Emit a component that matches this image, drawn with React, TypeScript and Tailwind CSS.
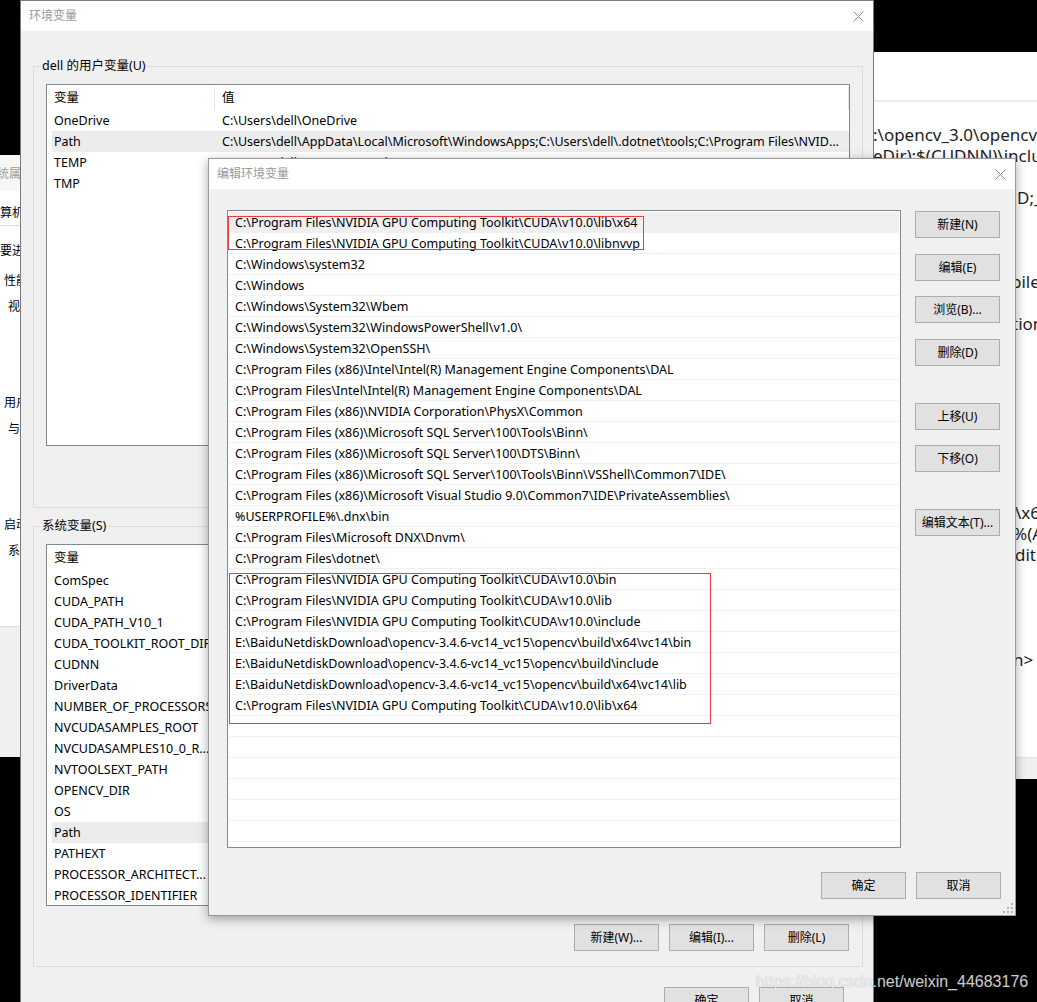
import React from "react";

const editPaths = [
  "C:\\Program Files\\NVIDIA GPU Computing Toolkit\\CUDA\\v10.0\\lib\\x64",
  "C:\\Program Files\\NVIDIA GPU Computing Toolkit\\CUDA\\v10.0\\libnvvp",
  "C:\\Windows\\system32",
  "C:\\Windows",
  "C:\\Windows\\System32\\Wbem",
  "C:\\Windows\\System32\\WindowsPowerShell\\v1.0\\",
  "C:\\Windows\\System32\\OpenSSH\\",
  "C:\\Program Files (x86)\\Intel\\Intel(R) Management Engine Components\\DAL",
  "C:\\Program Files\\Intel\\Intel(R) Management Engine Components\\DAL",
  "C:\\Program Files (x86)\\NVIDIA Corporation\\PhysX\\Common",
  "C:\\Program Files (x86)\\Microsoft SQL Server\\100\\Tools\\Binn\\",
  "C:\\Program Files (x86)\\Microsoft SQL Server\\100\\DTS\\Binn\\",
  "C:\\Program Files (x86)\\Microsoft SQL Server\\100\\Tools\\Binn\\VSShell\\Common7\\IDE\\",
  "C:\\Program Files (x86)\\Microsoft Visual Studio 9.0\\Common7\\IDE\\PrivateAssemblies\\",
  "%USERPROFILE%\\.dnx\\bin",
  "C:\\Program Files\\Microsoft DNX\\Dnvm\\",
  "C:\\Program Files\\dotnet\\",
  "C:\\Program Files\\NVIDIA GPU Computing Toolkit\\CUDA\\v10.0\\bin",
  "C:\\Program Files\\NVIDIA GPU Computing Toolkit\\CUDA\\v10.0\\lib",
  "C:\\Program Files\\NVIDIA GPU Computing Toolkit\\CUDA\\v10.0\\include",
  "E:\\BaiduNetdiskDownload\\opencv-3.4.6-vc14_vc15\\opencv\\build\\x64\\vc14\\bin",
  "E:\\BaiduNetdiskDownload\\opencv-3.4.6-vc14_vc15\\opencv\\build\\include",
  "E:\\BaiduNetdiskDownload\\opencv-3.4.6-vc14_vc15\\opencv\\build\\x64\\vc14\\lib",
  "C:\\Program Files\\NVIDIA GPU Computing Toolkit\\CUDA\\v10.0\\lib\\x64",
];

// pad the list with empty rows so the grid lines run to the bottom
const editRows = [...editPaths, ...Array(8).fill("")];

const userVars: [string, string][] = [
  ["OneDrive", "C:\\Users\\dell\\OneDrive"],
  [
    "Path",
    "C:\\Users\\dell\\AppData\\Local\\Microsoft\\WindowsApps;C:\\Users\\dell\\.dotnet\\tools;C:\\Program Files\\NVIDIA GPU Computing Toolkit\\CUDA\\v10.0\\bin",
  ],
  ["TEMP", "C:\\Users\\dell\\AppData\\Local\\Temp"],
  ["TMP", "C:\\Users\\dell\\AppData\\Local\\Temp"],
];

const sysVars: [string, string][] = [
  ["ComSpec", ""],
  ["CUDA_PATH", ""],
  ["CUDA_PATH_V10_1", ""],
  ["CUDA_TOOLKIT_ROOT_DIR", ""],
  ["CUDNN", ""],
  ["DriverData", ""],
  ["NUMBER_OF_PROCESSORS", ""],
  ["NVCUDASAMPLES_ROOT", ""],
  ["NVCUDASAMPLES10_0_R...", ""],
  ["NVTOOLSEXT_PATH", ""],
  ["OPENCV_DIR", ""],
  ["OS", ""],
  ["Path", ""],
  ["PATHEXT", ""],
  ["PROCESSOR_ARCHITECT...", ""],
  ["PROCESSOR_IDENTIFIER", ""],
];

const WinButton = ({ label, className = "" }: { label: string; className?: string }) => (
  <div
    className={`flex h-[27px] w-[85px] shrink-0 items-center justify-center border border-[#adadad] bg-[#e1e1e1] text-[12px] text-black ${className}`}
  >
    {label}
  </div>
);

const CloseIcon = () => (
  <svg width="11" height="11" viewBox="0 0 11 11">
    <path d="M0.5 0.5L10.5 10.5M10.5 0.5L0.5 10.5" stroke="#8c8c8c" strokeWidth="1" fill="none" />
  </svg>
);

const ResizeGrip = () => (
  <svg width="10" height="10" viewBox="0 0 10 10">
    <rect x="8" y="0" width="2" height="2" fill="#b4b4b4" />
    <rect x="4" y="4" width="2" height="2" fill="#b4b4b4" />
    <rect x="8" y="4" width="2" height="2" fill="#b4b4b4" />
    <rect x="0" y="8" width="2" height="2" fill="#b4b4b4" />
    <rect x="4" y="8" width="2" height="2" fill="#b4b4b4" />
    <rect x="8" y="8" width="2" height="2" fill="#b4b4b4" />
  </svg>
);

const ListView = ({ rows, selected }: { rows: [string, string][]; selected: string }) => (
  <div className="h-[362px] w-full overflow-hidden border border-[#828790] bg-white">
    <div className="flex h-[25px] items-center pt-[2px]">
      <div className="flex h-full w-[168px] shrink-0 items-center border-r border-[#e5e5e5] pl-[7px]">变量</div>
      <div className="flex h-full flex-1 items-center border-r border-[#e5e5e5] pl-[7px]">值</div>
    </div>
    {rows.map(([name, value]) => (
      <div
        key={name}
        className={`ml-[5px] flex h-[21px] items-center whitespace-nowrap pt-[2px] ${name === selected ? "bg-[#ececec]" : ""}`}
      >
        <div className="w-[163px] shrink-0 overflow-hidden pl-[2px]">{name}</div>
        <div className="min-w-0 flex-1 overflow-hidden text-ellipsis pl-[7px] pr-[8px]">{value}</div>
      </div>
    ))}
  </div>
);

const App = () => {
  return (
    <div className="relative h-[1002px] w-[1037px] overflow-hidden bg-black font-['Noto_Sans','Noto_Sans_CJK_SC',sans-serif] text-[12.5px] text-black">
      {/* right background window (project file text) */}
      <div className="absolute left-[873px] top-[52px] flex h-[727px] w-[164px] flex-col bg-white">
        <div className="h-[48px] shrink-0" />
        <div className="h-[2px] shrink-0 bg-[#ececec]" />
        <div className="flex-1 overflow-hidden whitespace-nowrap pt-[22px] text-[17px] leading-[21px] text-[#1e1e1e]">
          <div>:\opencv_3.0\opencv\build</div>
          <div>eDir):$(CUDNN)\include</div>
          <div>&nbsp;</div>
          <div className="pl-[144px]">D;_SCL</div>
          <div>&nbsp;</div>
          <div>&nbsp;</div>
          <div>&nbsp;</div>
          <div className="pl-[138px]">pile</div>
          <div>&nbsp;</div>
          <div className="pl-[139px]">tion</div>
          {Array.from({ length: 8 }).map((_, i) => (
            <div key={i}>&nbsp;</div>
          ))}
          <div className="pl-[142px]">\x64</div>
          <div className="pl-[140px]">%(Add</div>
          <div className="pl-[142px]">diti</div>
          {Array.from({ length: 4 }).map((_, i) => (
            <div key={i}>&nbsp;</div>
          ))}
          <div className="pl-[140px]">n&gt;</div>
        </div>
        <div className="h-[22px] shrink-0 border-t border-[#e3e3e3] bg-[#f0f0f0]" />
      </div>

      {/* left background window (system properties) */}
      <div className="absolute left-0 top-[155px] flex h-[602px] w-[40px] flex-col overflow-hidden whitespace-nowrap bg-white text-[12px] leading-[21px]">
        <div className="-ml-[15px] flex h-[36px] shrink-0 items-center bg-[#f7f7f7] text-[#9a9a9a]">系统属性</div>
        <div className="h-[35px] shrink-0 border-b border-[#dadada] pt-[11px]">
          <span className="-ml-[12px]">计算机名</span>
        </div>
        <div className="mt-[14px]">要进行大多数更改</div>
        <div className="mt-[9px] pl-[4px]">性能</div>
        <div className="mt-[5px] pl-[8px]">视觉效果</div>
        <div className="mt-[75px] pl-[4px]">用户配置文件</div>
        <div className="mt-[5px] pl-[8px]">与登录帐户</div>
        <div className="mt-[75px] pl-[4px]">启动和故障恢复</div>
        <div className="mt-[5px] pl-[8px]">系统启动</div>
        <div className="flex-1" />
        <div className="h-[131px] shrink-0 border-t border-[#dadada] bg-[#f0f0f0]" />
      </div>

      {/* 环境变量 dialog */}
      <div className="absolute left-[20px] top-0 flex h-[1040px] w-[854px] flex-col border-x border-t border-[#7a7a7a] bg-[#f0f0f0]">
        <div className="flex h-[30px] shrink-0 items-center justify-between bg-white pl-[8px] pr-[9px] text-[12px] text-[#999]">
          <span>环境变量</span>
          <CloseIcon />
        </div>

        <fieldset className="ml-[12px] mr-[10px] mt-[27px] min-w-0 border border-[#dcdcdc] px-[12px] pb-[61px] pt-[10px]">
          <legend className="-ml-[6px] px-[2px] leading-[16px]">dell 的用户变量(U)</legend>
          <ListView rows={userVars} selected="Path" />
        </fieldset>

        <fieldset className="ml-[12px] mr-[10px] mt-[10px] min-w-0 border border-[#dcdcdc] px-[12px] pb-[15px] pt-[10px]">
          <legend className="-ml-[6px] px-[2px] leading-[16px]">系统变量(S)</legend>
          <ListView rows={sysVars} selected="Path" />
          <div className="mt-[18px] flex justify-end gap-[10px] pr-[1px]">
            <WinButton label="新建(W)..." />
            <WinButton label="编辑(I)..." />
            <WinButton label="删除(L)" />
          </div>
        </fieldset>

        <div className="mt-[20px] flex justify-end gap-[10px] pr-[29px]">
          <WinButton label="确定" />
          <WinButton label="取消" />
        </div>
      </div>

      {/* 编辑环境变量 dialog */}
      <div className="absolute left-[208px] top-[158px] flex h-[758px] w-[808px] flex-col border border-[#9a9a9a] bg-[#f0f0f0] shadow-[0_3px_10px_rgba(0,0,0,0.35)]">
        <div className="flex h-[30px] shrink-0 items-center justify-between bg-white pl-[8px] pr-[9px] text-[12px] text-[#999]">
          <span>编辑环境变量</span>
          <CloseIcon />
        </div>

        <div className="flex pl-[18px] pt-[21px]">
          <div className="relative h-[638px] w-[674px] shrink-0 overflow-hidden border border-[#828790] bg-white pt-[1px]">
            {editRows.map((row, i) => (
              <div
                key={i}
                className={`mx-[1px] flex h-[21px] items-center whitespace-nowrap border-b border-[#f0f0f0] pl-[6px] pt-[2px] ${
                  i === 0 ? "bg-[#efefef]" : ""
                }`}
              >
                {row}
              </div>
            ))}
            <div className="absolute left-0 top-[5px] h-[34px] w-[416px] border border-[#ee3b3b]" />
            <div className="absolute left-[1px] top-[362px] h-[151px] w-[482px] border border-[#ee3b3b]" />
          </div>

          <div className="ml-[14px] flex flex-col pt-[1px]">
            <WinButton label="新建(N)" />
            <WinButton label="编辑(E)" className="mt-[16px]" />
            <WinButton label="浏览(B)..." className="mt-[15px]" />
            <WinButton label="删除(D)" className="mt-[16px]" />
            <WinButton label="上移(U)" className="mt-[37px]" />
            <WinButton label="下移(O)" className="mt-[15px]" />
            <WinButton label="编辑文本(T)..." className="mt-[37px]" />
          </div>
        </div>

        <div className="mt-[24px] flex justify-end gap-[10px] pr-[14px]">
          <WinButton label="确定" />
          <WinButton label="取消" />
        </div>

        <div className="absolute bottom-[2px] right-[2px] flex">
          <ResizeGrip />
        </div>
      </div>

      {/* csdn watermark */}
      <div className="absolute left-[756px] top-[971px] whitespace-nowrap font-['Liberation_Sans',sans-serif] text-[16px] leading-[22px] text-white/80 [text-shadow:0_0_1px_rgba(0,0,0,0.35)]">
        https://blog.csdn.net/weixin_44683176
      </div>
    </div>
  );
};

export default App;
